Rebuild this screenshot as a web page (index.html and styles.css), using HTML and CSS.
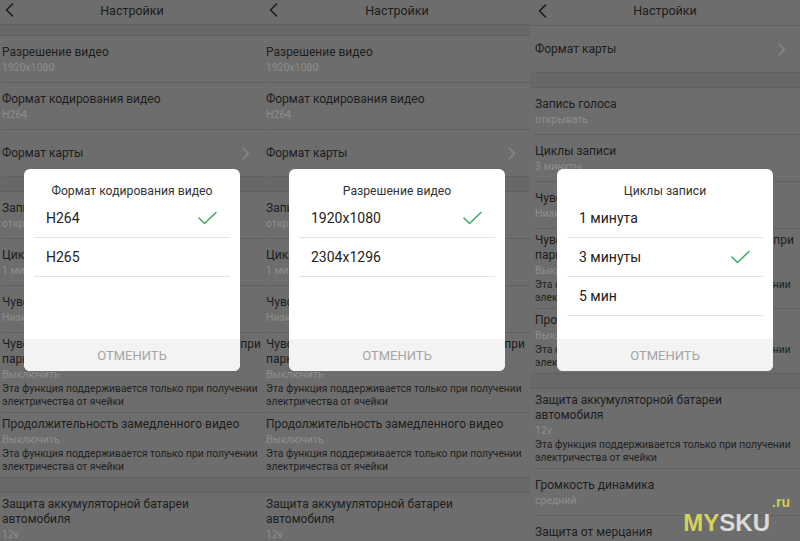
FILE: index.html
```html
<!DOCTYPE html>
<html lang="ru">
<head>
  <meta charset="UTF-8">
  <meta name="viewport" content="width=device-width, initial-scale=1.0">
  <title>Настройки</title>
  <link rel="stylesheet" href="styles.css">
</head>
<body>
  <div class="shots">

    <!-- screen 1 -->
    <section class="phone">
      <div class="topbar">
        <svg class="back" width="9" height="14" viewBox="0 0 9 14"><polyline points="7.5,1 1.5,7 7.5,13"/></svg>
        <span>Настройки</span>
      </div>
      <div class="band first"></div>
      <div class="row"><div class="t">Разрешение видео</div><div class="s">1920x1080</div></div>
      <div class="row"><div class="t">Формат кодирования видео</div><div class="s">H264</div></div>
      <div class="row single"><div class="t">Формат карты</div>
        <svg class="more" width="8" height="13" viewBox="0 0 8 13"><polyline points="1,1 6.5,6.5 1,12"/></svg></div>
      <div class="band"></div>
      <div class="row"><div class="t">Запись голоса</div><div class="s">открывать</div></div>
      <div class="row"><div class="t">Циклы записи</div><div class="s">1 минута</div></div>
      <div class="row"><div class="t">Чувствительность датчика столкновения</div><div class="s">Низкий</div></div>
      <div class="row desc">
        <div class="t">Чувствительность датчика столкновения при<br>парковке</div>
        <div class="s">Выключить</div>
        <div class="d">Эта функция поддерживается только при получении<br>электричества от ячейки</div>
      </div>
      <div class="row desc">
        <div class="t">Продолжительность замедленного видео</div>
        <div class="s">Выключить</div>
        <div class="d">Эта функция поддерживается только при получении<br>электричества от ячейки</div>
      </div>
      <div class="band"></div>
      <div class="row desc">
        <div class="t">Защита аккумуляторной батареи<br>автомобиля</div>
        <div class="s">12v</div>
        <div class="d">Эта функция поддерживается только при получении<br>электричества от ячейки</div>
      </div>

      <div class="dialog">
        <div class="dialog-title">Формат кодирования видео</div>
        <div class="options">
          <div class="option">H264
            <svg class="tick" width="19" height="14" viewBox="0 0 19 14"><polyline points="1,7 6.5,12.5 18,1.5"/></svg></div>
          <div class="option">H265</div>
        </div>
        <div class="cancel">ОТМЕНИТЬ</div>
      </div>
    </section>

    <!-- screen 2 -->
    <section class="phone">
      <div class="topbar">
        <svg class="back" width="9" height="14" viewBox="0 0 9 14"><polyline points="7.5,1 1.5,7 7.5,13"/></svg>
        <span>Настройки</span>
      </div>
      <div class="band first"></div>
      <div class="row"><div class="t">Разрешение видео</div><div class="s">1920x1080</div></div>
      <div class="row"><div class="t">Формат кодирования видео</div><div class="s">H264</div></div>
      <div class="row single"><div class="t">Формат карты</div>
        <svg class="more" width="8" height="13" viewBox="0 0 8 13"><polyline points="1,1 6.5,6.5 1,12"/></svg></div>
      <div class="band"></div>
      <div class="row"><div class="t">Запись голоса</div><div class="s">открывать</div></div>
      <div class="row"><div class="t">Циклы записи</div><div class="s">1 минута</div></div>
      <div class="row"><div class="t">Чувствительность датчика столкновения</div><div class="s">Низкий</div></div>
      <div class="row desc">
        <div class="t">Чувствительность датчика столкновения при<br>парковке</div>
        <div class="s">Выключить</div>
        <div class="d">Эта функция поддерживается только при получении<br>электричества от ячейки</div>
      </div>
      <div class="row desc">
        <div class="t">Продолжительность замедленного видео</div>
        <div class="s">Выключить</div>
        <div class="d">Эта функция поддерживается только при получении<br>электричества от ячейки</div>
      </div>
      <div class="band"></div>
      <div class="row desc">
        <div class="t">Защита аккумуляторной батареи<br>автомобиля</div>
        <div class="s">12v</div>
        <div class="d">Эта функция поддерживается только при получении<br>электричества от ячейки</div>
      </div>

      <div class="dialog">
        <div class="dialog-title">Разрешение видео</div>
        <div class="options">
          <div class="option">1920x1080
            <svg class="tick" width="19" height="14" viewBox="0 0 19 14"><polyline points="1,7 6.5,12.5 18,1.5"/></svg></div>
          <div class="option">2304x1296</div>
        </div>
        <div class="cancel">ОТМЕНИТЬ</div>
      </div>
    </section>

    <!-- screen 3 -->
    <section class="phone wide">
      <div class="topbar">
        <svg class="back" width="9" height="14" viewBox="0 0 9 14"><polyline points="7.5,1 1.5,7 7.5,13"/></svg>
        <span>Настройки</span>
      </div>
      <div class="row single"><div class="t">Формат карты</div>
        <svg class="more" width="8" height="13" viewBox="0 0 8 13"><polyline points="1,1 6.5,6.5 1,12"/></svg></div>
      <div class="band"></div>
      <div class="row"><div class="t">Запись голоса</div><div class="s">открывать</div></div>
      <div class="row"><div class="t">Циклы записи</div><div class="s">3 минуты</div></div>
      <div class="row"><div class="t">Чувствительность датчика столкновения</div><div class="s">Низкий</div></div>
      <div class="row desc">
        <div class="t">Чувствительность датчика столкновения при<br>парковке</div>
        <div class="s">Выключить</div>
        <div class="d">Эта функция поддерживается только при получении<br>электричества от ячейки</div>
      </div>
      <div class="row desc">
        <div class="t">Продолжительность замедленного видео</div>
        <div class="s">Выключить</div>
        <div class="d">Эта функция поддерживается только при получении<br>электричества от ячейки</div>
      </div>
      <div class="band"></div>
      <div class="row desc">
        <div class="t">Защита аккумуляторной батареи<br>автомобиля</div>
        <div class="s">12v</div>
        <div class="d">Эта функция поддерживается только при получении<br>электричества от ячейки</div>
      </div>
      <div class="row"><div class="t">Громкость динамика</div><div class="s">средний</div></div>
      <div class="row"><div class="t">Защита от мерцания</div><div class="s">50Hz</div></div>

      <div class="dialog">
        <div class="dialog-title">Циклы записи</div>
        <div class="options">
          <div class="option">1 минута</div>
          <div class="option">3 минуты
            <svg class="tick" width="19" height="14" viewBox="0 0 19 14"><polyline points="1,7 6.5,12.5 18,1.5"/></svg></div>
          <div class="option">5 мин</div>
        </div>
        <div class="cancel">ОТМЕНИТЬ</div>
      </div>
    </section>

    <div class="watermark"><span class="my">MY</span><span class="sku">SKU</span><span class="ru">.ru</span></div>
  </div>
</body>
</html>
```

FILE: styles.css
```css
* {
  box-sizing: border-box;
}
body {
  margin: 0;
  font-family: Roboto, "Noto Sans", sans-serif;
  background: #6e6e6e;
  overflow: hidden;
}
.shots {
  display: grid;
  grid-template-columns: 264px 266px 270px;
  height: 541px;
  position: relative;
}
.phone {
  position: relative;
  overflow: hidden;
  background: #6d6d6d;
  padding-left: 2px;
}
.phone.wide {
  padding-left: 5px;
}
.topbar {
  height: 25px;
  margin-left: -2px;
  display: grid;
  grid-template-columns: 30px 1fr 30px;
  align-items: center;
  border-bottom: 1px solid #606060;
  font-size: 12.5px;
  color: #1c1c1c;
}
.wide .topbar {
  height: 26px;
  margin-left: -5px;
}
.topbar span {
  text-align: center;
  padding-bottom: 4px;
}
.back {
  margin-left: 5px;
  margin-bottom: 4px;
}
.wide .back {
  margin-left: 8px;
}
svg polyline {
  fill: none;
  stroke-linecap: round;
  stroke-linejoin: round;
}
.back polyline {
  stroke: #1e1e1e;
  stroke-width: 1.7;
}
.band {
  height: 15px;
  margin-left: -5px;
  background: #686868;
  border-bottom: 1px solid #606060;
}
.band.first {
  height: 11px;
}
.row {
  padding: 9px 14px 7px 0;
  border-bottom: 1px solid #606060;
  white-space: nowrap;
}
.row.single {
  height: 47px;
  padding-top: 0;
  padding-bottom: 0;
  display: flex;
  align-items: center;
  justify-content: space-between;
}
.row.desc {
  padding-top: 4px;
  padding-bottom: 4px;
}
.t {
  font-size: 12px;
  line-height: 15px;
  color: #1d1d1d;
}
.s {
  font-size: 10.5px;
  line-height: 15px;
  color: #8d8d8d;
}
.d {
  font-size: 10.3px;
  line-height: 13px;
  color: #1f1f1f;
}
.more polyline {
  stroke: #8a8a8a;
  stroke-width: 1.3;
}
.dialog {
  position: absolute;
  top: 169px;
  left: 50%;
  width: 216px;
  height: 202px;
  margin-left: -108px;
  background: #fff;
  border-radius: 6px;
  overflow: hidden;
  display: flex;
  flex-direction: column;
}
.dialog-title {
  padding-top: 14px;
  line-height: 16px;
  font-size: 12.2px;
  text-align: center;
  color: #333;
}
.options {
  padding: 0 10px;
}
.option {
  height: 39px;
  padding: 0 13px 0 12px;
  border-bottom: 1px solid #e4e4e4;
  display: flex;
  align-items: center;
  justify-content: space-between;
  font-size: 14px;
  color: #222;
}
.tick polyline {
  stroke: #3fae6b;
  stroke-width: 1.6;
}
.cancel {
  margin-top: auto;
  height: 32px;
  background: #f3f3f3;
  display: flex;
  align-items: center;
  justify-content: center;
  font-size: 13px;
  color: #a5a5a5;
}
.watermark {
  position: absolute;
  right: 30px;
  bottom: 6px;
  font-family: "Liberation Sans", Arial, sans-serif;
  font-weight: bold;
  font-size: 24px;
  line-height: 1;
}
.my {
  color: #d2d25c;
}
.sku {
  color: #d9d9d9;
}
.ru {
  position: absolute;
  right: -20px;
  top: -16px;
  font-size: 14px;
  color: #cccc55;
}
```
